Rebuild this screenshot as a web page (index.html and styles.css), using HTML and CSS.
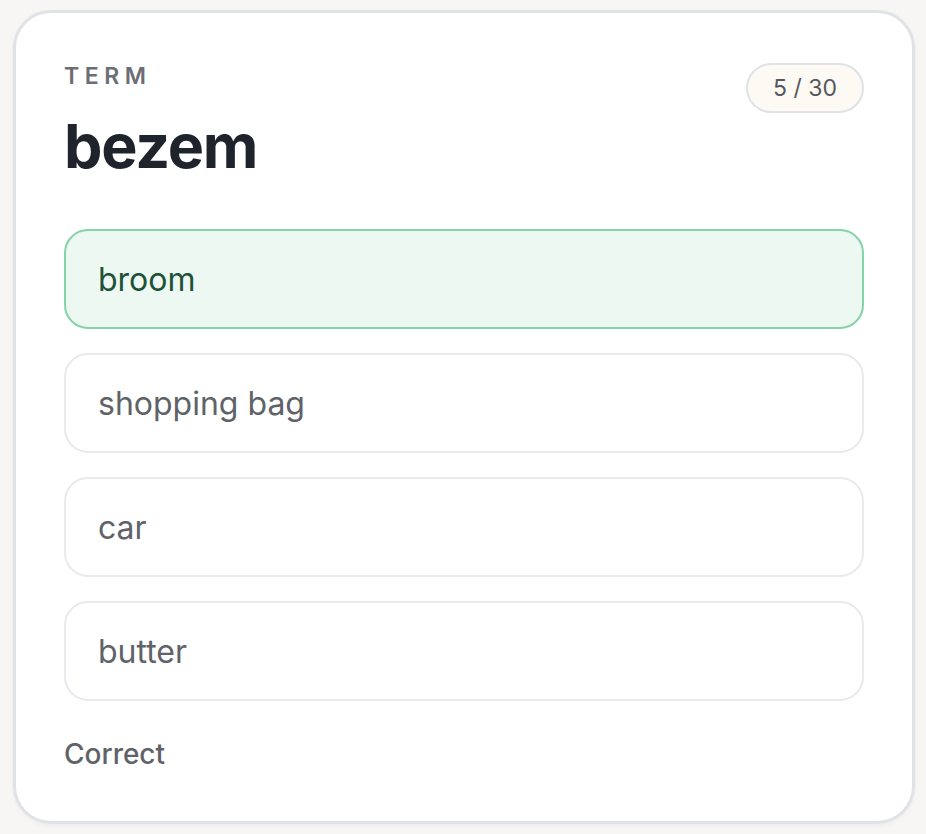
FILE: index.html
```html
<!DOCTYPE html>
<html lang="en">
<head>
<meta charset="utf-8">
<title>Quiz card</title>
<link rel="stylesheet" href="styles.css">
</head>
<body>
<main class="card">
  <header class="card-head">
    <div class="term-block">
      <div class="term-label">TERM</div>
      <h1 class="term-word">bezem</h1>
    </div>
    <div class="progress">5 / 30</div>
  </header>
  <ul class="options">
    <li class="option option-correct">broom</li>
    <li class="option">shopping bag</li>
    <li class="option">car</li>
    <li class="option">butter</li>
  </ul>
  <p class="feedback">Correct</p>
</main>
</body>
</html>
```

FILE: styles.css
```css
html, body {
  margin: 0;
  padding: 0;
}
body {
  background: #f7f6f4;
  font-family: Inter, "Noto Sans", "Liberation Sans", sans-serif;
  padding: 10px 11px 10px 13px;
  box-sizing: border-box;
  height: 834px;
}
.card {
  box-sizing: border-box;
  height: 814px;
  background: #ffffff;
  border: 3px solid #dfe3e8;
  border-radius: 38px;
  padding: 48px 48px;
  box-shadow: 0 2px 4px rgba(0, 0, 0, 0.04);
}
.card-head {
  display: flex;
  justify-content: space-between;
  align-items: flex-start;
}
.term-label {
  font-size: 23px;
  line-height: 28px;
  font-weight: 600;
  letter-spacing: 0.24em;
  color: #6b6e75;
  margin-top: 1px;
}
.term-word {
  margin: 20px 0 0;
  font-size: 61px;
  line-height: 1.2;
  font-weight: 700;
  letter-spacing: -0.02em;
  color: #1f232b;
}
.progress {
  margin-top: 2px;
  box-sizing: border-box;
  height: 50px;
  padding: 0 25px;
  display: flex;
  align-items: center;
  border: 2px solid #dfe3e8;
  border-radius: 25px;
  background: #fdfaf4;
  color: #55585e;
  font-size: 23px;
}
.options {
  list-style: none;
  margin: 46px 0 0;
  padding: 0;
  display: flex;
  flex-direction: column;
  gap: 24px;
}
.option {
  box-sizing: border-box;
  height: 100px;
  display: flex;
  align-items: center;
  padding: 0 32px;
  border: 2px solid #e8eaed;
  border-radius: 24px;
  background: #ffffff;
  color: #5f6368;
  font-size: 32px;
}
.option-correct {
  border-color: #86d3a9;
  background: #ecf8f1;
  color: #1d5238;
}
.feedback {
  margin: 36px 0 0;
  font-size: 28px;
  font-weight: 500;
  color: #5f6368;
}
```
